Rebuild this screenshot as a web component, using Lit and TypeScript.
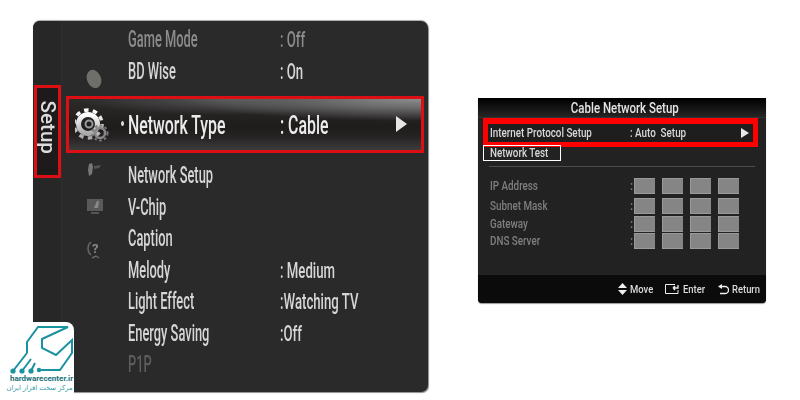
import { LitElement, html, css } from "lit";
import { customElement } from "lit/decorators.js";

@customElement("app-root")
export class AppRoot extends LitElement {
  static styles = css`
    :host { display: block; width: 800px; height: 400px; background: #fff; overflow: hidden; position: relative; font-family: Roboto, "Liberation Sans", sans-serif; }
    .page { display: flex; align-items: flex-start; padding: 21px 0 0 33px; }
    .tv { width: 395px; height: 371px; flex: none; display: flex; border-radius: 7px; background: #2b2a2a; box-shadow: 1px 1px 1px #8b8b8b, 0 -1px 1px #aaa; overflow: hidden; filter: blur(0.4px); }
    .side { width: 29px; flex: none; padding: 64px 0 0 1px; box-sizing: border-box; border-right: 1px solid #2f2e2e; background: #282727; }
    .setup { width: 27px; height: 93px; box-sizing: border-box; border: 3px solid #dc0f14; padding-bottom: 8px; background: #1c1a1a; display: flex; align-items: center; justify-content: center; }
    .setup span { writing-mode: vertical-rl; color: #dcdcdc; font-size: 21px; font-weight: 500; transform: scaleY(0.98); line-height: 1; }
    .list { flex: 1; padding-top: 3px; min-width: 0; }
    .row { height: 31.5px; display: grid; grid-template-columns: 66px 152px 1fr; grid-template-rows: 31.5px; align-items: center; font-size: 23px; font-weight: 500; color: #d6d6d6; white-space: nowrap; }
    .tx { display: inline-block; transform: scaleX(0.56); transform-origin: 0 50%; }
    .val { font-size: 22px; }
    .val .tx { transform: scaleX(0.6); }
    .dim { color: #8c8c8c; }
    .off { color: #5d5d5d; }
    .cell { height: 100%; display: flex; justify-content: center; align-items: flex-start; }
    .i1 { margin-top: 12px; }
    .i2 { margin-top: 0; }
    .i3 { margin-top: 6px; }
    .i4 { margin-top: 17px; }
    .hl { height: 57px; box-sizing: border-box; margin: 9px 4px 7px 4px; border: 3px solid #dc0f14; grid-template-columns: 59px 152px 1fr; grid-template-rows: 51px; font-size: 26px; color: #ececec; position: relative;
      background: radial-gradient(ellipse 240px 22px at 100% 0, #8d8d8d 0%, #6a6a6a 40%, rgba(80,80,80,0) 100%), radial-gradient(ellipse 150px 16px at 45% 0, #555 0%, rgba(70,70,70,0) 100%), linear-gradient(#2d2a2a, #1f1c1c 55%, #262323 75%, #3d3c3c); }
    .hl .tx { transform: scaleX(0.61); margin-top: -4px; }
    .hl .cell { align-items: center; justify-content: flex-start; padding-left: 6px; box-sizing: border-box; }
    .bullet { position: absolute; left: 52px; top: 22px; width: 3px; height: 5px; background: #ddd; border-radius: 50%; }
    .hl .arrow { position: absolute; right: 14px; top: 17px; width: 0; height: 0; border-left: 11px solid #e6e6e6; border-top: 8.5px solid transparent; border-bottom: 8.5px solid transparent; }

    .osd { width: 288px; height: 205px; flex: none; margin: 77px 0 0 50px; display: flex; flex-direction: column; border-radius: 0 0 4px 4px; background: #232222; color: #d8d8d8; font-size: 12px; font-weight: 500; box-shadow: 0 1px 1px #999; filter: blur(0.3px); }
    .osd .tx { transform: scaleX(0.82); }
    .title { height: 20px; flex: none; display: flex; align-items: center; justify-content: center; padding-left: 6px; background: linear-gradient(#000, #262626); border-bottom: 1px solid #333; font-size: 14px; color: #e4e4e4; box-sizing: border-box; }
    .osd .title .tx { transform: scaleX(0.82); transform-origin: 50% 50%; }
    .ips { height: 29px; flex: none; box-sizing: border-box; margin: 0 8px 0 5px; border: solid #f00; border-width: 6px 5px 5px 5px; background: #1f1e1e; display: grid; grid-template-columns: 140px 1fr auto; align-items: center; padding-left: 2px; padding-right: 4px; white-space: nowrap; }
    .ips i { width: 0; height: 0; border-left: 8px solid #e8e8e8; border-top: 5px solid transparent; border-bottom: 5px solid transparent; }
    .nt { height: 16px; width: 78px; flex: none; box-sizing: border-box; margin: -2px 0 0 5px; border: 1px solid #fff; display: flex; align-items: center; padding-left: 6px; position: relative; white-space: nowrap; }
    .divider { height: 1px; flex: none; background: #4d4d4d; margin: 5px 11px 9px 11px; }
    .ipgrid { display: grid; grid-template-rows: 20px 19px 17px 17px; padding-left: 12px; color: #7f7f7f; }
    .ipr { display: grid; grid-template-columns: 140px 4px repeat(4, 28px); align-items: center; white-space: nowrap; }
    .ipr b { width: 21px; height: 16px; box-sizing: border-box; background: #858585; border: 1px solid #9a9a9a; border-width: 1px 0 1px 1px; }
    .ipr em { font-style: normal; }
    .foot { margin-top: auto; height: 28px; flex: none; background: #0b0b0b; border-radius: 0 0 4px 4px; display: flex; align-items: center; justify-content: flex-end; padding-right: 7px; color: #dcdcdc; font-size: 11.5px; }
    .fi { display: flex; align-items: center; gap: 3px; margin-left: 13px; }
    .fi span { display: block; }
    .w1 { width: 22px; } .w2 { width: 22px; } .w3 { width: 27px; }

    .logo { position: absolute; left: 0; top: 322px; width: 74px; height: 73px; background: #fff; border-radius: 0 8px 0 0; display: flex; flex-direction: column; align-items: center; }
    .logo svg { flex: none; }
    .lg1 { font: 700 8px/10px Roboto, sans-serif; color: #176f79; white-space: nowrap; margin-left: 9px; }
    .lg2 { font: 400 6.8px/9px "DejaVu Sans", sans-serif; color: #2a9aa5; white-space: nowrap; margin-left: 5px; }
  `;

  private row(label: string, value: string, cls = "", icon: unknown = "") {
    return html`<div class="row ${cls}"><div class="cell">${icon}</div><span><span class="tx">${label}</span></span><span class="val"><span class="tx">${value}</span></span></div>`;
  }

  private ip(label: string) {
    return html`<div class="ipr"><span><span class="tx">${label}</span></span><em>:</em><b></b><b></b><b></b><b></b></div>`;
  }

  render() {
    const blob = html`<svg class="i1" width="18" height="22" viewBox="0 0 18 22"><ellipse cx="8" cy="11" rx="7" ry="9.5" transform="rotate(-22 8 11)" fill="#6e6e6a"/></svg>`;
    const net = html`<svg class="i2" width="18" height="18" viewBox="0 0 18 18"><path d="M3 4 6 3 7 7 6 14 3 16 2 10Z" fill="#777"/><path d="M8 6 15 5 13 8 8 9Z" fill="#555"/></svg>`;
    const mon = html`<svg class="i3" width="18" height="18" viewBox="0 0 18 18"><rect x="1" y="1" width="16" height="12" fill="#595959"/><path d="M11 3 13 3 12 10 8 10Z" fill="#8a8a8a"/><rect x="5" y="14" width="8" height="2" fill="#555"/></svg>`;
    const q = html`<svg class="i4" width="18" height="20" viewBox="0 0 18 20" fill="none"><path d="M5 2C1 5 1 12 5 15" stroke="#666" stroke-width="1.5"/><text x="6" y="13" font-size="13" font-weight="700" fill="#888" font-family="Roboto">?</text><path d="M6 18 10 16 13 18" stroke="#666" stroke-width="1.5"/></svg>`;
    const gear = html`<svg width="34" height="38" viewBox="0 0 34 38">
      <defs><linearGradient id="g" x1="0" y1="0" x2="0" y2="1"><stop offset="0" stop-color="#fff"/><stop offset="1" stop-color="#aaa"/></linearGradient></defs>
      <circle cx="13" cy="18" r="9.5" fill="none" stroke="url(#g)" stroke-width="5"/>
      <circle cx="13" cy="18" r="14" fill="none" stroke="url(#g)" stroke-width="3.5" stroke-dasharray="4.5 4.3"/>
      <circle cx="14" cy="18" r="3.5" fill="none" stroke="#999" stroke-width="2"/>
      <circle cx="25" cy="27" r="5" fill="none" stroke="#888" stroke-width="2.5"/>
      <circle cx="25" cy="27" r="7.5" fill="none" stroke="#777" stroke-width="2" stroke-dasharray="2.5 2.5"/>
    </svg>`;
    return html`
      <div class="page">
        <section class="tv">
          <div class="side"><div class="setup"><span>Setup</span></div></div>
          <div class="list">
            ${this.row("Game Mode", ": Off", "dim")}
            ${this.row("BD Wise", ": On", "", blob)}
            <div class="row hl">
              <div class="cell">${gear}</div>
              <span><span class="tx">Network Type</span></span>
              <span><span class="tx">: Cable</span></span>
              <span class="bullet"></span><span class="arrow"></span>
            </div>
            ${this.row("Network Setup", "", "", net)}
            ${this.row("V-Chip", "", "", mon)}
            ${this.row("Caption", "", "", q)}
            ${this.row("Melody", ": Medium")}
            ${this.row("Light Effect", ":Watching TV")}
            ${this.row("Energy Saving", ":Off")}
            ${this.row("P1P", "", "off")}
          </div>
        </section>
        <section class="osd">
          <div class="title"><span class="tx">Cable Network Setup</span></div>
          <div class="ips"><span><span class="tx">Internet Protocol Setup</span></span><span><span class="tx">: Auto&nbsp; Setup</span></span><i></i></div>
          <div class="nt"><span class="tx">Network Test</span></div>
          <div class="divider"></div>
          <div class="ipgrid">
            ${this.ip("IP Address")}${this.ip("Subnet Mask")}${this.ip("Gateway")}${this.ip("DNS Server")}
          </div>
          <div class="foot">
            <div class="fi"><svg width="9" height="12" viewBox="0 0 9 12"><path d="M4.5 0 9 5H0ZM0 7H9L4.5 12Z" fill="#eee"/></svg><span class="w1"><span class="tx">Move</span></span></div>
            <div class="fi"><svg width="15" height="10" viewBox="0 0 15 10" fill="none"><path d="M10 .5H.5V9.5H13V6" stroke="#eee"/><path d="M13 1V4H8M8 4 10 2M8 4 10 6" stroke="#eee" stroke-width="1.3"/></svg><span class="w2"><span class="tx">Enter</span></span></div>
            <div class="fi"><svg width="11" height="11" viewBox="0 0 11 11" fill="none"><path d="M3 2.5H7A3.2 3.2 0 0 1 7 9.5H2" stroke="#eee" stroke-width="1.3"/><path d="M0 2.5 4 0V5Z" fill="#eee"/></svg><span class="w3"><span class="tx">Return</span></span></div>
          </div>
        </section>
      </div>
      <div class="logo">
        <svg width="74" height="52" viewBox="0 0 74 52" fill="none" stroke="#1a93a0" stroke-width="2">
          <path d="M27 31V20L38 5H68L42 17V26L56 33 72 18V31L60 48H38"/>
          <path d="M27 31 13 49M31 37 22 49M35 41 31 49"/>
          <g fill="#1a93a0" stroke="none"><circle cx="13" cy="49" r="2.6"/><circle cx="22" cy="49" r="2.6"/><circle cx="31" cy="49" r="2.6"/><circle cx="39" cy="48" r="2.2"/></g>
        </svg>
        <div class="lg1">hardwarecenter.ir</div>
        <div class="lg2">مرکز سخت افزار ایران</div>
      </div>
    `;
  }
}
